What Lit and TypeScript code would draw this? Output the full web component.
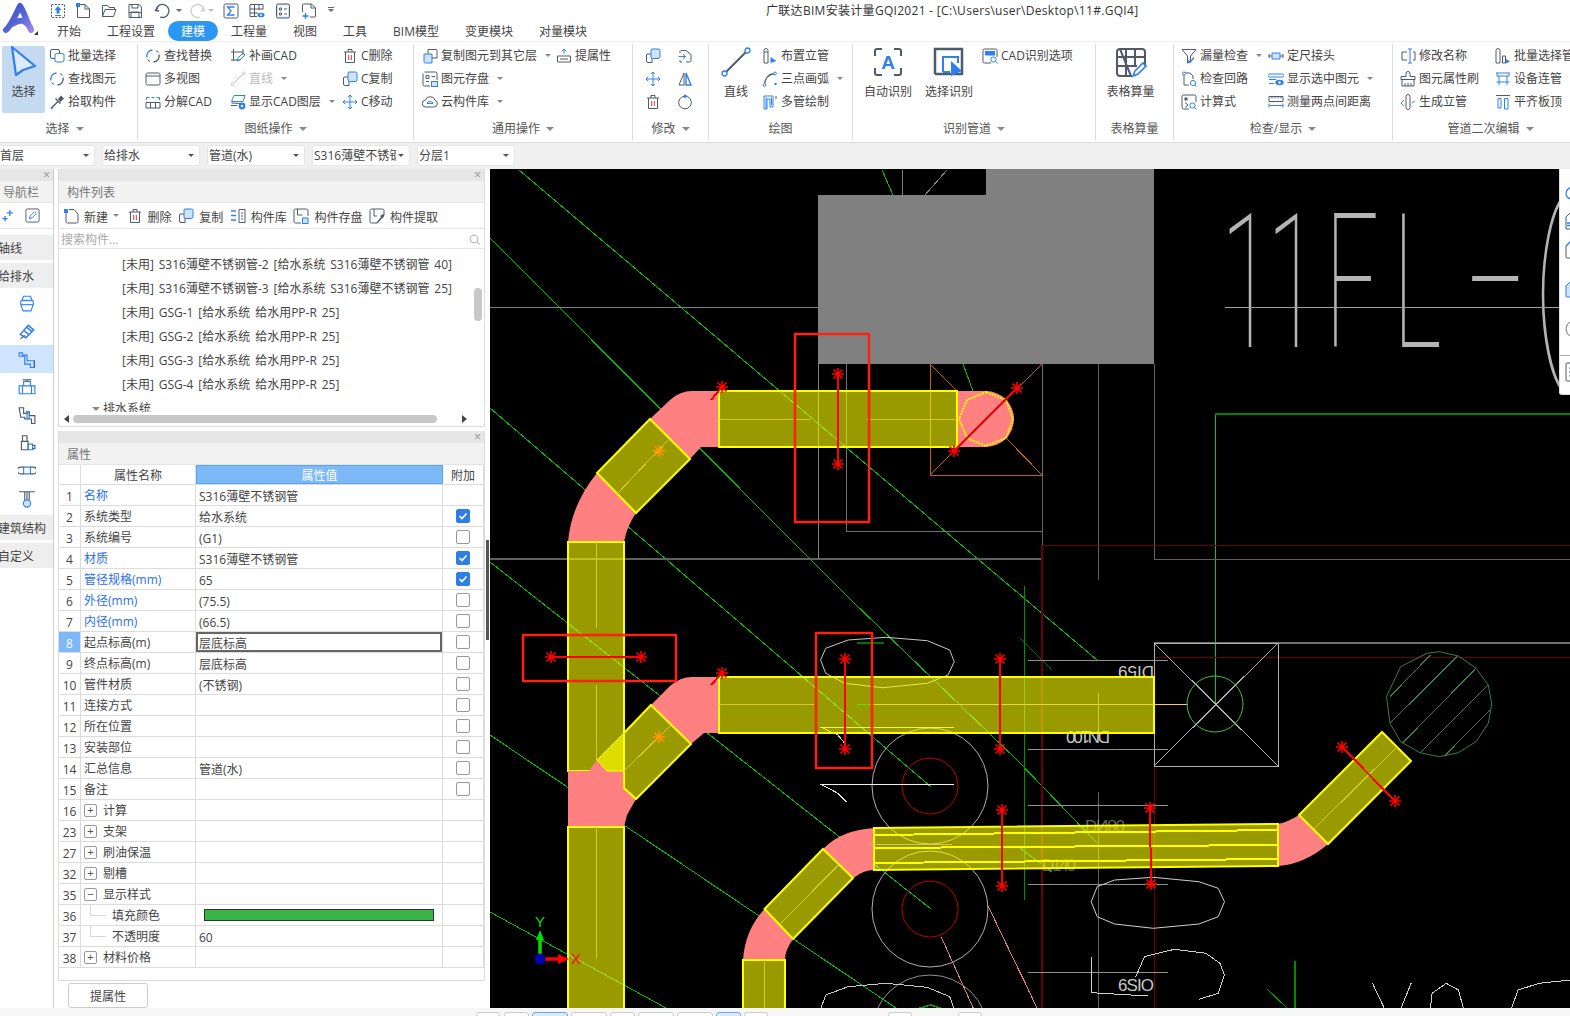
import { LitElement, html, css, svg } from "lit";
import { customElement } from "lit/decorators.js";

const D = "#4f5a6b", B = "#2f80ed", R = "#d9363e", F = "#cfe3fb";
const s = (d: string, c = D, w = 1) => svg`<path d=${d} stroke=${c} stroke-width=${w} fill="none"/>`;
const fl = (d: string, c = B, f = F) => svg`<path d=${d} stroke=${c} fill=${f}/>`;

const ICONS: Record<string, any> = {
  batch: svg`${s("M3 1.500h6a1.500 1.500 0 0 1 1.500 1.500v6a1.500 1.500 0 0 1-1.500 1.500H3A1.500 1.500 0 0 1 1.500 9V3A1.500 1.500 0 0 1 3 1.500z")}${fl("M7.500 5.500h6a1.500 1.500 0 0 1 1.500 1.500v5a2 2 0 0 1-2 2H8a2 2 0 0 1-2-2V7a1.500 1.500 0 0 1 1.500-1.500z", B, "#fff")}`,
  find: svg`${s("M2 9.500A6 6 0 0 1 7.500 2", B, 1.300)}${s("M14 6.500A6 6 0 0 1 8.500 14", D, 1.300)}${s("M11 2.500l2.500 2M2.500 11.500l2.500 2", D)}`,
  pick: svg`${s("M2 14.500l7.500-7.500M6.500 4.500l5 5", D, 1.400)}<path d="M9 5l3-3.500 3 3L11.500 8z" fill=${D}/>${s("M2 14.500l2-1", B, 1.500)}`,
  view: svg`${s("M2.500 2h11A1.500 1.500 0 0 1 15 3.500v9a1.500 1.500 0 0 1-1.500 1.500h-11A1.500 1.500 0 0 1 1 12.500v-9A1.500 1.500 0 0 1 2.500 2zM1 5h14")}`,
  explode: svg`${s("M1.500 6V3.500h3M11.500 3.500h3V6M6.500 3.500h3", B)}${s("M1 8.500h14v5.500H1zM5.500 8.500V14M10.500 8.500V14")}`,
  patch: svg`${s("M1 4h12M3.500 1v12M1 12h9M13 1v6")}${s("M7 13l1-3 5-5 2 2-5 5z", B)}`,
  line: svg`${s("M3 13L13 3", "#c4c4c4")}<circle cx="2.500" cy="13.500" r="1.400" stroke="#c4c4c4" fill="#fff"/><circle cx="13.500" cy="2.500" r="1.400" stroke="#c4c4c4" fill="#fff"/>`,
  layers: svg`${s("M4 1.500h11l-2 6H1.500z", B)}${s("M1.500 9l9 .5M1 11.500h6")}<circle cx="12" cy="12" r="3.400" fill=${B}/><circle cx="12" cy="12" r="1.200" fill="#fff"/>`,
  del: svg`${s("M2 4h12M6 4V1.500h4V4M3.500 4v10.500h9V4")}${s("M6.700 7v5M9.300 7v5", R)}`,
  copy: svg`${s("M2 6h5v8.500H3a1.500 1.500 0 0 1-1.500-1.500V7z")}${fl("M6.500 1h7A1.500 1.500 0 0 1 15 2.500v6a2 2 0 0 1-2 2H7.500A1.500 1.500 0 0 1 6 9V2z")}`,
  move: svg`${s("M8 1v14M1 8h14M8 1L6 3M8 1l2 2M8 15l-2-2M8 15l2-2M1 8l2-2M1 8l2 2M15 8l-2-2M15 8l-2 2", B)}`,
  copyto: svg`${fl("M2 6h8v9H3.500A1.500 1.500 0 0 1 2 13.500z")}${s("M6 1.500h8a1 1 0 0 1 1 1V10H10")}${s("M6 6V2")}`,
  disk: svg`${s("M2.500 1h11A1.500 1.500 0 0 1 15 2.500V9M8 15H2.500A1.500 1.500 0 0 1 1 13.500v-11M4 4.500h3v3H4zM9.500 5.500H13M4 10.500h3")}<rect x="9.500" y="10.500" width="6" height="5" fill=${F} stroke=${B}/>`,
  cloud: svg`${s("M4 13h8a3.500 3.500 0 0 0 1-6.800A5 5 0 0 0 3.500 6 3.500 3.500 0 0 0 4 13z")}${s("M5 9.500a3 2 0 0 1 6 0z", B)}`,
  attr: svg`${s("M1.500 8h13v6h-13zM4 11h8")}${s("M8 6V1M5.500 3.500L8 1l2.500 2.500", B)}`,
  mirror: svg`${s("M4 2.500h5l5 4v6c0 1-1 1.500-2 1.500H9")}${s("M1.500 8.500h7M6 6l2.500 2.500L6 11", B)}${s("M3 2.500V5M3 12v2h2")}`,
  flip: svg`${s("M7 2v12H2z")}<path d="M9 2v12h5z" stroke=${B} fill="none" stroke-width="1.400"/>`,
  rotate: svg`<circle cx="8" cy="8.500" r="6.300" stroke=${D} fill="none"/><path d="M7 0l4 2.300L7 4.500z" fill=${B}/>`,
  riser: svg`${s("M2 2.500a2 2 0 0 1 4 0V15H2zM2 4h4")}<path d="M8.500 9l6 4-6 2z" fill=${B}/>`,
  arc: svg`${s("M2.500 13.500C3 8 6 3.500 12 2.500", D, 1.300)}<circle cx="13" cy="2.500" r="1.400" fill="#fff" stroke=${B}/><circle cx="2.500" cy="14" r="1.400" fill="#fff" stroke=${B}/><circle cx="13.500" cy="13" r="1.200" fill=${B}/>`,
  multi: svg`${s("M2 15V2h9v11H8V5H5v10zM4 15V3.500M9.500 3.500V11", B)}${s("M14 2v3")}`,
  cadopt: svg`${s("M9 15H2.500A1.500 1.500 0 0 1 1 13.500v-11A1.500 1.500 0 0 1 2.500 1h11A1.500 1.500 0 0 1 15 2.500V9")}<rect x="3" y="3" width="10" height="4.500" fill=${B}/><circle cx="11.500" cy="11.500" r="2.600" stroke=${B} fill="none"/>${s("M13.500 13.500l2 2", B)}`,
  leak: svg`${s("M1 1.500h14L9.500 8v5.500L6.500 15V8z")}${s("M7 12l2 2.500 4-5", B, 1.300)}`,
  loop: svg`${s("M3 4v10h5M3 2h6l3 3v3")}<circle cx="3" cy="2.500" r="1.500" stroke=${B} fill="#fff"/><circle cx="12" cy="12" r="2.600" stroke=${B} fill="none"/>${s("M14 14l1.500 1.500", B)}`,
  calc: svg`${s("M8 15H2.500A1.500 1.500 0 0 1 1 13.500v-11A1.500 1.500 0 0 1 2.500 1h11A1.500 1.500 0 0 1 15 2.500V8M4 8.500l3 2.500-3 2.500")}<rect x="3.500" y="3.500" width="3" height="3" fill=${D}/><circle cx="11.500" cy="11.500" r="2.600" stroke=${B} fill="none"/>${s("M13.500 13.500l2 2", B)}`,
  joint: svg`${s("M1 6v4M1 8h3M15 6v4M12 8h3", D)}${fl("M4 5h8v6H4z", B, F)}`,
  show: svg`${s("M1.500 3h13a1 1 0 0 1 0 3h-13a1 1 0 0 1 0-3zM1 8.500h7M1 12.500h5", B)}<ellipse cx="11.500" cy="11.500" rx="4.200" ry="2.800" fill=${B}/><circle cx="11.500" cy="11.500" r="1.200" fill="#fff"/>`,
  measure: svg`${s("M1 2.500h14v5H1zM4 2.500v2M7 2.500v2M10 2.500v2M13 2.500v2")}${s("M1 11.500h14M1 9.500v4M15 9.500v4", B)}`,
  rename: svg`${s("M8 1h4M8 15h4M10 1v14", B)}${s("M7 4H2v8h5M13 4h2v8h-2")}`,
  brush: svg`${s("M6 5.500V2.500a2 2 0 0 1 4 0v3h5v3H1v-3zM2 8.500V15h12V8.500M5 15v-3M8 15v-3M11 15v-3")}`,
  genriser: svg`${s("M6 2.500a2 2 0 0 1 4 0v11a2 2 0 0 1-4 0z")}${s("M1 9l3-3M1 9l3 3M12 9l3-2", B)}`,
  riser2: svg`${s("M1 2.500a2 2 0 0 1 4 0V15H1zM7.500 8h3v7h-3z")}<path d="M11 11l4 2.500-4 2z" fill=${B}/>`,
  dev: svg`${s("M1 2h14M2 2v3h12V2M4 5v9M12 5v9M1.500 11h13", B)}`,
  level: svg`${s("M1 1.500h14")}${s("M3 4.500h3V14H3zM9.500 4.500h3.500V15H9.500z", B)}`,
  neww: svg`${s("M3 3v10.500A1.500 1.500 0 0 0 4.500 15h9a1.500 1.500 0 0 0 1.500-1.500V6l-4-4.500H6")}<rect x="1" y="1" width="4" height="4" fill=${B}/>`,
  libr: svg`${s("M9 1.500h6v13H9zM11 5h2M11 8h2M11 11h2")}${s("M1 3h5M1 7.500h5M1 12h5", B, 1.300)}`,
  save2: svg`${s("M8 15H2.500A1.500 1.500 0 0 1 1 13.500v-11A1.500 1.500 0 0 1 2.500 1h11A1.500 1.500 0 0 1 15 2.500V8M4.500 1v6h5")}<rect x="9.500" y="10" width="5.500" height="5.500" fill=${F} stroke=${B}/>`,
  extract: svg`${s("M8 15H2.500A1.500 1.500 0 0 1 1 13.500v-11A1.500 1.500 0 0 1 2.500 1h11A1.500 1.500 0 0 1 15 2.500V7M5 1v7h3")}${s("M8 15l5-6", D, 1.500)}<path d="M11 8l3-2 1.500 1.500-2 3z" fill=${D}/>`,
  plus2: svg`${s("M9 1v7M5.500 4.500h7", B, 1.500)}${s("M3.500 8v6M.5 11h6", B, 1.500)}`,
  edit: svg`${s("M2.500 1h11A1.500 1.500 0 0 1 15 2.500v11a1.500 1.500 0 0 1-1.500 1.500h-11A1.500 1.500 0 0 1 1 13.500v-11A1.500 1.500 0 0 1 2.500 1z")}${s("M4.500 11.500l1-3 4.500-4.500 2 2-4.500 4.500z", B)}`,
  n1: svg`${fl("M5 2h6l1.500 3.500H3.500z", B, "#fff")}${fl("M2.500 6h11v3.500l-2 5.500h-7l-2-5.500z", B, "#fff")}${s("M2.500 9.500h11", B)}`,
  n2: svg`${s("M2 11l7-8 5 4-7 7zM5 7.500l5 4M7.500 4.500l5 4", B, 1.300)}${s("M2 15l4-3", D)}`,
  n3: svg`${s("M1 2.500v3h5v7h5v3h3.500v-6H8V4.500H4v-2z", B)}${s("M14.500 9.500v6", D)}`,
  n4: svg`${s("M1 7h14v7H1zM5 7V3h6v4", B)}${s("M4 1.500h8M8 1.500v2")}${s("M4 7v7M12 7v7", B)}`,
  n5: svg`${s("M1 1.500h4v5h3V5h2v3.500h5v7h-3v-4H6V10H2.500z")}${s("M8 5h2v6H8z", B)}`,
  n6: svg`${s("M4 1.500h4v5H4zM3 6.500h6V14H3z")}${s("M9 9h4v5H9z", B)}${s("M13 10h2v3h-2")}`,
  n7: svg`${fl("M5 4.500h6v6H5z", B, "#fff")}${s("M5 4.500H2.500a3 3 0 0 0 0 6H5M11 4.500h2.500a3 3 0 0 1 0 6H11")}`,
  n8: svg`${s("M1 1.500h14M8 1.500V9M6 1.500V9M10 1.500V9")}<circle cx="8" cy="12" r="3.200" fill=${F} stroke=${B}/>`,
  q1: svg`<rect x="1.500" y="1.500" width="13" height="13" stroke=${D} fill="none" stroke-dasharray="2 1.300"/><path d="M8 3l3.500 4H9.500v3.500h-3V7H4.500z" fill=${B}/><path d="M5 12.500h6" stroke=${B}/>`,
  q2: svg`${s("M5 1.500h5l4.500 4.500v8.500h-12V3.500")}<rect x="1" y="0" width="4" height="4" fill=${B}/>${s("M10 1.500V6h4.500")}`,
  q3: svg`${s("M1.500 13.500v-11h5l1.500 2h5.500v2M1.500 13.500l2.500-7h11l-2.500 7z")}`,
  q4: svg`${s("M2 1.500h10l2.500 2.500v10.500H2zM5 1.500V5h6V1.500M4 14.500V9h8v5.500M1.800 9.500h12.400", D)}`,
  q5: svg`${s("M4 4.500l-2.500 3 3.500 .5", D, 1.300)}${s("M2 7a6.500 6.500 0 1 1 4 7", D, 1.300)}`,
  q6: svg`${s("M12 4.500l2.500 3-3.500 .5", "#ccc", 1.300)}${s("M14 7a6.500 6.500 0 1 0-4 7", "#ccc", 1.300)}`,
  q7: svg`${s("M2.500 1h11A1.500 1.500 0 0 1 15 2.500v11a1.500 1.500 0 0 1-1.500 1.500h-11A1.500 1.500 0 0 1 1 13.500v-11A1.500 1.500 0 0 1 2.500 1z")}${s("M11.500 4h-7l3.500 4-3.500 4h7", B, 1.300)}`,
  q8: svg`${s("M1 1.500h13v5M1 1.500v12h7M5.500 1.500v12M1 6h13M1 10h8M10 1.500V7")}<ellipse cx="12" cy="12" rx="3.500" ry="2.300" fill=${B}/><circle cx="12" cy="12" r="1" fill="#fff"/>`,
  q9: svg`<rect x="1.500" y="1" width="13" height="14" rx="1.500" fill=${F} stroke=${D} /><rect x="3" y="2.500" width="10" height="11" fill="#fff"/>${s("M4.500 5h2v2h-2zM9 6h3M4.500 10h2v2h-2zM9 11h3", D)}`,
  q10: svg`${s("M1.500 9V2a1 1 0 0 1 1-1h8l4 4v8a1 1 0 0 1-1 1H9M10 1v4h4.500")}${s("M1.500 13h6M4.500 10v6", B, 1.400)}`,
};

const BIG: Record<string, any> = {
  sel: svg`<path d="M4 2L27 21l-12 4-7 5z" transform="translate(0 -1)" fill="#dce9f7" stroke=${B} stroke-width="2.200" stroke-linejoin="round"/>`,
  line: svg`<path d="M6 26L26 6" stroke=${D} stroke-width="2"/><circle cx="4.500" cy="27.500" r="2.500" fill="#fff" stroke=${B} stroke-width="1.300"/><circle cx="27.500" cy="4.500" r="2.500" fill="#fff" stroke=${B} stroke-width="1.300"/>`,
  auto: svg`${s("M3 10V5a2 2 0 0 1 2-2h5M22 3h5a2 2 0 0 1 2 2v5M29 22v5a2 2 0 0 1-2 2h-5M10 29H5a2 2 0 0 1-2-2v-5", D, 2)}<text x="16" y="23" text-anchor="middle" font-family="Liberation Sans" font-weight="700" font-size="19" fill=${B}>A</text>`,
  pick: svg`${s("M2 28V3h27v25H2", D, 2.500)}${s("M10 26V11h15v6M10 26h7", B, 2)}<path d="M18 15l11 10-11 5z" fill=${B}/>`,
  table: svg`${s("M5 3h22a3 3 0 0 1 3 3v14M16 30H5a3 3 0 0 1-3-3V6a3 3 0 0 1 3-3zM2 11h28M2 20h20M11 3v27M20 3v17", D, 2)}${s("M18 30l2-5 8-8 3 3-8 8z", B, 1.600)}`,
};

const ic = (k: string, z = 16) => html`<svg class="ic" width=${z} height=${z} viewBox="0 0 16 16" fill="none">${ICONS[k]}</svg>`;

type Item = { i: string; t: string; dd?: boolean; off?: boolean };
type Col = { w?: number; items?: Item[]; big?: string; bt?: string; mr?: number };
type Group = { w: number; pad: number; label: string; dd?: boolean; cols: Col[]; lo?: number };

const GROUPS: Group[] = [
  { w: 138, pad: 2, label: "选择", dd: true, lo: -8, cols: [
    { big: "sel", bt: "选择" },
    { items: [{ i: "batch", t: "批量选择" }, { i: "find", t: "查找图元" }, { i: "pick", t: "拾取构件" }] },
  ]},
  { w: 276, pad: 7, label: "图纸操作", dd: true, cols: [
    { w: 85, items: [{ i: "find", t: "查找替换" }, { i: "view", t: "多视图" }, { i: "explode", t: "分解CAD" }] },
    { w: 112, items: [{ i: "patch", t: "补画CAD" }, { i: "line", t: "直线", dd: true, off: true }, { i: "layers", t: "显示CAD图层", dd: true }] },
    { items: [{ i: "del", t: "C删除" }, { i: "copy", t: "C复制" }, { i: "move", t: "C移动" }] },
  ]},
  { w: 219, pad: 8, label: "通用操作", dd: true, cols: [
    { w: 134, items: [{ i: "copyto", t: "复制图元到其它层", dd: true }, { i: "disk", t: "图元存盘", dd: true }, { i: "cloud", t: "云构件库", dd: true }] },
    { items: [{ i: "attr", t: "提属性" }] },
  ]},
  { w: 76, pad: 12, label: "修改", dd: true, cols: [
    { w: 32, items: [{ i: "copy", t: "" }, { i: "move", t: "" }, { i: "del", t: "" }] },
    { items: [{ i: "mirror", t: "" }, { i: "flip", t: "" }, { i: "rotate", t: "" }] },
  ]},
  { w: 144, pad: 9, label: "绘图", cols: [
    { big: "line", bt: "直线", w: 36, mr: 8 },
    { items: [{ i: "riser", t: "布置立管" }, { i: "arc", t: "三点画弧", dd: true }, { i: "multi", t: "多管绘制" }] },
  ]},
  { w: 243, pad: 11, label: "识别管道", dd: true, cols: [
    { big: "auto", bt: "自动识别", w: 48, mr: 13 },
    { big: "pick", bt: "选择识别", w: 48, mr: 9 },
    { items: [{ i: "cadopt", t: "CAD识别选项" }] },
  ]},
  { w: 78, pad: 10, label: "表格算量", cols: [{ big: "table", bt: "表格算量", w: 49 }] },
  { w: 219, pad: 7, label: "检查/显示", dd: true, cols: [
    { w: 87, items: [{ i: "leak", t: "漏量检查", dd: true }, { i: "loop", t: "检查回路" }, { i: "calc", t: "计算式" }] },
    { items: [{ i: "joint", t: "定尺接头" }, { i: "show", t: "显示选中图元", dd: true }, { i: "measure", t: "测量两点间距离" }] },
  ]},
  { w: 177, pad: 7, label: "管道二次编辑", dd: true, lo: 18, cols: [
    { w: 95, items: [{ i: "rename", t: "修改名称" }, { i: "brush", t: "图元属性刷" }, { i: "genriser", t: "生成立管" }] },
    { items: [{ i: "riser2", t: "批量选择管" }, { i: "dev", t: "设备连管" }, { i: "level", t: "平齐板顶" }] },
  ]},
];

const TABS = ["开始", "工程设置", "建模", "工程量", "视图", "工具", "BIM模型", "变更模块", "对量模块"];
const QAT: [string, number][] = [["q1", 50], ["q2", 75], ["q3", 101], ["q4", 127], ["q5", 154], ["q6", 190], ["q7", 223], ["q8", 249], ["q9", 275], ["q10", 301]];

type Row = { n: number; k: string; v?: string; blue?: boolean; c?: "c" | "u"; exp?: string; tree?: number; bar?: boolean; sel?: boolean };
const ROWS: Row[] = [
  { n: 1, k: "名称", v: "S316薄壁不锈钢管", blue: true },
  { n: 2, k: "系统类型", v: "给水系统", c: "c" },
  { n: 3, k: "系统编号", v: "(G1)", c: "u" },
  { n: 4, k: "材质", v: "S316薄壁不锈钢管", blue: true, c: "c" },
  { n: 5, k: "管径规格(mm)", v: "65", blue: true, c: "c" },
  { n: 6, k: "外径(mm)", v: "(75.5)", blue: true, c: "u" },
  { n: 7, k: "内径(mm)", v: "(66.5)", blue: true, c: "u" },
  { n: 8, k: "起点标高(m)", v: "层底标高", c: "u", sel: true },
  { n: 9, k: "终点标高(m)", v: "层底标高", c: "u" },
  { n: 10, k: "管件材质", v: "(不锈钢)", c: "u" },
  { n: 11, k: "连接方式", c: "u" },
  { n: 12, k: "所在位置", c: "u" },
  { n: 13, k: "安装部位", c: "u" },
  { n: 14, k: "汇总信息", v: "管道(水)", c: "u" },
  { n: 15, k: "备注", c: "u" },
  { n: 16, k: "计算", exp: "+" },
  { n: 23, k: "支架", exp: "+" },
  { n: 27, k: "刷油保温", exp: "+" },
  { n: 32, k: "剔槽", exp: "+" },
  { n: 35, k: "显示样式", exp: "-" },
  { n: 36, k: "填充颜色", tree: 1, bar: true },
  { n: 37, k: "不透明度", v: "60", tree: 2 },
  { n: 38, k: "材料价格", exp: "+" },
];
const LIST = [
  "[未用] S316薄壁不锈钢管-2 [给水系统 S316薄壁不锈钢管 40]",
  "[未用] S316薄壁不锈钢管-3 [给水系统 S316薄壁不锈钢管 25]",
  "[未用] GSG-1 [给水系统 给水用PP-R 25]",
  "[未用] GSG-2 [给水系统 给水用PP-R 25]",
  "[未用] GSG-3 [给水系统 给水用PP-R 25]",
  "[未用] GSG-4 [给水系统 给水用PP-R 25]",
];
const TOOLS: [string, string, boolean?][] = [["neww", "新建", true], ["del", "删除"], ["copy", "复制"], ["libr", "构件库"], ["save2", "构件存盘"], ["extract", "构件提取"]];
const DROPS: [string, number][] = [["首层", 97], ["给排水", 98], ["管道(水)", 98], ["S316薄壁不锈钢管", 98], ["分层1", 98]];
const TABBTN: [number, number, boolean?][] = [[476, 24], [504, 25], [532, 36, true], [571, 36], [610, 25], [638, 36], [677, 36], [716, 25, true], [744, 24], [888, 24], [958, 24]];

// --- canvas helpers: coordinates read from crops are mapped to page coordinates ---
const map = (pts: string, ox: number, oy: number, sx: number) =>
  pts.trim().split(/\s+/).map((p) => { const [x, y] = p.split(",").map(Number); return `${(ox + x / sx).toFixed(1)},${(oy + y / 3).toFixed(1)}`; }).join(" ");
const z8 = (p: string) => map(p, 490, 600, 2.904);
const z9 = (p: string) => map(p, 1020, 600, 2.851);
const L = (pts: string, c: string, w = 1) => svg`<polyline points=${pts} fill="none" stroke=${c} stroke-width=${w} shape-rendering="crispEdges"/>`;
const star = (x: number, y: number, c = "#ff0000") => svg`<g stroke=${c} stroke-width="1.600">
  <path d=${`M${x - 6} ${y}H${x + 6}M${x} ${y - 6}V${y + 6}M${x - 4.500} ${y - 4.500}L${x + 4.500} ${y + 4.500}M${x - 4.500} ${y + 4.500}L${x + 4.500} ${y - 4.500}`}/></g>`;
const PIPE = "#ffff00", PINK = "#ff8080", GR = "#00c000", G1 = "#808080", DR = "#6a0000";
const pipe = (pts: string, w = 2) => svg`<polygon points=${pts} fill=${PIPE} fill-opacity="0.6" stroke=${PIPE} stroke-width=${w} stroke-linejoin="miter"/>`;
const CL = "#d8c830";

function drawing() {
  return svg`
  <g>
    ${L("519,170 1097,660", GR)}
    ${L("490,238 851,600 1017,760 1097,843", GR)}
    ${L("490,408 931,787", GR)}
    ${L("490,562 931,909", GR)}
    ${L("490,735 896,1008", GR)}
    ${L("490,912 666,1008", GR)}
    ${L("1020,848 1052,872", GR)}
    ${L("882,170 893,195", GR)}
    ${L("963,364 973,391", GR)}
    ${L("1215,414 1215,704", "#00d000")}
    ${L("1215,414 1570,414", "#008000", 2)}
    ${L("1024,586 1024,900", "#009000")}
    ${L("1020,638 1052,670", "#007000")}
    ${L("857,643 884,643", "#007000", 2)}
    ${L("1295,961 1295,1008", "#008a00", 2)}
    ${L("1267,989 1287,1008", "#00a000")}
    ${L("902,170 902,195", G1)}
    ${L("947,170 925,195", G1)}
    ${L("490,307 818,307", G1)}
    ${L("490,559 1042,559", "#606060", 2)}
    ${L("818,364 818,559", G1)}
    ${L("846,364 846,531 1042,531", "#707070")}
    ${L("1042,364 1042,559", "#606060")}
    ${L("1098,364 1098,580", "#606060")}
    ${L("1154,364 1154,559 1570,559", "#606060")}
    ${L("1042,545 1570,545", DR)}
    ${L("1042,545 1042,1008", DR, 2)}
    ${L("1154,643 1154,1008", DR)}
    ${L("1154,657 1570,657", DR)}
    ${L("1098,792 1098,1008", "#606060")}
    ${L("1098,693 1098,733", "#808080")}
    ${["660", "749", "805", "884", "972"].map((y) => L(`1028,${y} 1168,${y}`, "#909090", 1))}
  </g>

  <polygon points="818,195 986,195 986,169 1154,169 1154,364 818,364" fill="#808080"/>

  <g>
    ${L("930,364 957,391", "#c06400")}
    ${L("1042,364 930,475", "#c06400")}
    ${L("1006,438 1042,475 930,475 930,364", "#c06400")}
    ${L("1042,364 1042,475", "#707070")}
  </g>

  ${L("1154,643 1570,643", "#707070", 2)}
  ${L("1154,643 1278,643 1278,766 1154,766 1154,643", "#b0b0b0")}
  ${L("1154,643 1278,766", "#b0b0b0")}
  ${L("1278,643 1154,766", "#b0b0b0")}
  ${L("1155,704 1188,704", "#ffc080")}
  <circle cx="1215" cy="704" r="28" fill="none" stroke="#40c040"/>
  <polygon points=${z9("1045,290 1085,200 1160,160 1195,155 1250,168 1300,205 1335,255 1345,312 1335,370 1300,425 1250,458 1195,470 1140,458 1085,425 1055,370")} fill="none" stroke="#3a7c52"/>
  ${L(z9("1055,290 1170,165"), "#3a7c52")}${L(z9("1055,370 1245,170"), "#3a7c52")}${L(z9("1090,430 1300,205"), "#3a7c52")}${L(z9("1140,460 1335,255"), "#3a7c52")}${L(z9("1210,468 1340,330"), "#3a7c52")}

  <g fill="none">
    <circle cx="930" cy="786" r="58" stroke="#b0b0b0"/>
    <circle cx="930" cy="786" r="28" stroke="#c00000"/>
    <circle cx="930" cy="909" r="58" stroke="#b0b0b0"/>
    <circle cx="930" cy="909" r="28" stroke="#c00000"/>
    <circle cx="930" cy="1033" r="58" stroke="#909090"/>
  </g>
  ${L(z8("1235,1228 1280,1215 1320,1228"), "#00a000", 1.500)}
  ${L(z8("1310,1010 1405,1228"), "#e08080")}
  ${L(z8("1445,915 1568,1180"), "#e08080")}
  ${L(z9("0,1115 50,1228"), "#e08080")}
  ${L(z8("960,552 1346,552"), "#f0f0f0")}
  ${L(z8("960,552 1010,580 1035,605"), "#e0e0e0")}
  ${L(z8("960,381 1346,381"), "#e0e0c0")}
  ${L(z8("960,381 1010,405 1030,430"), "#e0e0c0")}
  <polygon points=${z8("960,180 975,145 1040,120 1150,112 1270,122 1335,150 1348,185 1330,225 1270,250 1140,263 1030,250 975,220")} fill="none" stroke="#c8c8c8"/>
  ${L(z8("960,1228 975,1185 1040,1160 1150,1150 1270,1162 1335,1190 1348,1228"), "#c8c8c8")}
  <polygon points=${z9("203,905 220,860 270,840 380,832 510,845 565,865 583,905 565,950 510,972 380,985 270,972 220,950")} fill="none" stroke="#d0d0d0"/>
  ${L(z9("510,1198 565,1180 583,1125 570,1090 530,1060 440,1048 355,1070 330,1130"), "#d0d0d0")}
  ${L(z9("203,1070 203,1178 365,1188"), "#d0d0d0")}
  ${L(z9("1005,1150 1040,1228"), "#d0d0d0")}${L(z9("1115,1150 1085,1228"), "#d0d0d0")}
  ${L(z9("1170,1228 1175,1180 1215,1150 1250,1170 1265,1228"), "#d0d0d0")}
  ${L(z9("1400,1228 1420,1170 1480,1150 1568,1140"), "#d0d0d0")}

  <g class="cad">
    <text transform="rotate(180 1136 672)" x="1136" y="678" text-anchor="middle" font-size="17" textLength="36">DI59</text>
    <text transform="rotate(180 1088 737)" x="1088" y="743" text-anchor="middle" font-size="17" textLength="44">DN100</text>
    <text transform="translate(0 1653) scale(1 -1)" x="1105" y="833" text-anchor="middle" font-size="17" textLength="40" fill-opacity="0.500">DN80</text>
    <text x="1059" y="871" text-anchor="middle" font-size="17" textLength="34" fill-opacity="0.500">D140</text>
    <text x="1136" y="991" text-anchor="middle" font-size="17" textLength="36">6SIO</text>
  </g>

  <g class="cadtitle" transform="scale(0.5 1)">
    <text y="347" x="2442 2534 2650 2786 2930 3070">11FL–(</text>
  </g>
  ${L("1225,307 1570,307", "#a0a0a0")}

  <!-- pipe run 1 -->
  <path d="M719 391H692Q680 391 670 400L650 419L690 459L701 447H719Z" fill=${PINK}/>
  <path d="M597 473Q571 505 568 542H624Q627 526 636 513Z" fill=${PINK}/>
  <path d="M957 391H986V447H957Z" fill=${PINK}/>
  <circle cx="986" cy="419" r="28" fill=${PINK}/>
  <polygon points="986,392 1006,400 1013,419 1006,438 986,446 967,438 959,419 967,400" fill="none" stroke=${PIPE} stroke-width="2" stroke-dasharray="2 1"/>
  ${pipe("719,391 957,391 957,447 719,447")}
  ${L("719,419 810,419", CL)}${L("867,419 957,419", CL)}
  ${pipe("650,419 690,459 636,513 597,473")}
  ${L("668,440 617,494", CL)}
  ${pipe("568,542 624,542 624,771 568,771")}
  ${L("596,542 596,628", CL)}${L("596,685 596,760", CL)}

  <!-- pipe run 2 -->
  <polygon points="568,771 589,771 597,760 607,771 624,771 624,788 636,799 627,815 624,827 568,827" fill=${PINK}/>
  <path d="M651 705L670 686Q680 677 692 677H719V733H704L691 744Z" fill=${PINK}/>
  <polygon points="597,760 624,733 624,771 607,771" fill="#dddd00" stroke=${PIPE}/>
  ${pipe("651,705 691,744 636,799 624,788 624,733")}
  ${L("671,725 624,771", CL)}
  ${pipe("568,827 624,827 624,1012 568,1012")}
  ${L("596,827 596,959", CL)}
  ${pipe("719,677 1154,677 1154,733 719,733")}
  ${L("719,704 814,704", CL)}${L("857,704 1154,704", "#e8d840")}
  ${L("857,704 870,704", "#60e000")}

  <!-- pipe run 3 -->
  <path d="M823 849Q834 838 848 833Q860 829 874 828V870Q864 870 855 877L853 878Z" fill=${PINK}/>
  <path d="M764.500 909Q745 930 743 960H785Q785 950 793 939Z" fill=${PINK}/>
  <path d="M1278 824Q1288 822 1299 815L1328 844Q1305 864 1278 866Z" fill=${PINK}/>
  ${pipe("823,849 853,878 793,939 764.500,909")}
  ${L("838.500,865 780,924", CL)}
  ${pipe("743,960 785,960 785,1012 743,1012")}
  ${L("764,960 764,1008", CL)}
  ${pipe("874,828 1278,824 1278,866 874,870")}
  ${L("874,835 1278,830", PIPE, 2)}${L("874,848 1278,845", PIPE, 2)}${L("874,863 1278,859", PIPE, 2)}
  ${L("869,844 952,844", "#c8c860")}
  ${pipe("1299,815 1382,732 1411,761 1328,844")}
  ${L("1314,829 1397,747", CL)}

  <!-- handles -->
  ${L("838,374 838,464", "#ff0000", 2)}
  ${star(838, 374)}${star(838, 464)}
  ${L("722,387 711,400", "#ff0000", 2)}${star(722, 387)}
  ${L("1017,388 954,451", "#ff0000", 2)}${star(1017, 388)}${star(954, 451)}
  ${star(659, 451, "#ff9900")}
  ${L("722,673 711,685", "#ff0000", 2)}${star(722, 673)}
  ${star(659, 737, "#ff9900")}
  ${L("551,657 641,657", "#ff0000", 2)}${star(551, 657)}${star(641, 657)}
  ${L("845,659 845,749", "#ff0000", 2)}${star(845, 659)}${star(845, 749)}
  ${L("1000,659 1000,749", "#ff0000", 2)}${star(1000, 659)}${star(1000, 749)}
  ${L("1002,810 1002,886", "#ff0000", 2)}${star(1002, 810)}${star(1002, 886)}
  ${L("1150,808 1151,884", "#ff0000", 2)}${star(1150, 808)}${star(1151, 884)}
  ${L("1342,747 1395,801", "#ff0000", 2)}${star(1342, 747)}${star(1395, 801)}

  <!-- annotation rectangles -->
  <g fill="none" stroke="#ff2010" stroke-width="2.500" stroke-linejoin="round">
    <rect x="795" y="334" width="74" height="188"/>
    <rect x="523" y="635" width="153" height="46"/>
    <rect x="816" y="633" width="56" height="135"/>
  </g>

  <!-- axis -->
  <path d="M540 956V938" stroke="#00e000" stroke-width="3.500"/>
  <path d="M536 940L540 930L544 940Z" fill="#00e000"/>
  <text x="540" y="927" text-anchor="middle" class="ax" fill="#00e000">Y</text>
  <path d="M545 959H559" stroke="#ff0000" stroke-width="3.500"/>
  <path d="M558 954L569 959L558 964Z" fill="#ff0000"/>
  <text x="576" y="964" text-anchor="middle" class="ax" fill="#ff0000">X</text>
  <circle cx="540" cy="959" r="5.500" fill="#0000b0"/>
  `;
}

@customElement("app-root")
export class AppRoot extends LitElement {
  static styles = css`
    :host { display: block; width: 1570px; height: 1016px; overflow: hidden; background: #fff; font: 12px/17px "Open Sans", "Noto Sans CJK SC", "Liberation Sans", sans-serif; color: #444; }
    * { box-sizing: border-box; }
    svg.ic { flex: none; display: block; }
    .top { height: 41px; display: flex; }
    .logo { width: 44px; flex: none; position: relative; }
    .logo svg { display: block; margin: 2px 0 0 2px; }
    .logo i { position: absolute; left: 34px; top: 31px; border-style: solid; border-width: 0 0 4px 4px; border-color: transparent transparent #333 transparent; }
    .topr { flex: 1; min-width: 0; }
    .qat { height: 21px; position: relative; }
    .qat svg { position: absolute; top: 3px; }
    .qa { position: absolute; top: 9px; border-style: solid; border-width: 3px 3px 0 3px; border-color: #666 transparent transparent transparent; }
    .qa.light { border-top-color: #bbb; }
    .more { position: absolute; left: 284px; top: 7px; width: 6px; border-top: 1px solid #666; padding-top: 1px; }
    .more::after { content: ""; display: block; border-style: solid; border-width: 3px 3px 0 3px; border-color: #666 transparent transparent transparent; }
    .title { position: absolute; left: 722px; top: 2px; white-space: nowrap; font-size: 12px; color: #333; letter-spacing: .3px; }
    .tabs { display: flex; height: 20px; }
    .tab { padding: 0 13px; line-height: 22px; height: 20px; border-radius: 10px; white-space: nowrap; }
    .tab.on { background: #2b96f3; color: #fff; }
    .ribbon { height: 102px; border-top: 1px solid #eee; display: flex; padding-top: 2px; border-bottom: 1px solid #dcdcdc; }
    .group { flex: none; height: 96px; border-right: 1px solid #dcdcdc; display: flex; flex-direction: column; }
    .group:last-child { border-right: 0; }
    .gbody { height: 74px; display: flex; white-space: nowrap; }
    .glabel { height: 20px; display: flex; align-items: center; justify-content: center; gap: 6px; color: #555; padding-top: 1px; }
    .tri { width: 0; height: 0; border-style: solid; border-width: 4px 4px 0 4px; border-color: #888 transparent transparent transparent; flex: none; }
    .col { flex: none; }
    .item { height: 23px; display: flex; align-items: center; gap: 3px; color: #444; }
    .item.off { color: #bcbcbc; }
    .item .tri { margin-left: 5px; border-width: 3px 3px 0 3px; }
    .bigb { flex: none; display: flex; flex-direction: column; align-items: center; padding-top: 2px; gap: 5px; }
    .bigb.sel { background: #c3daf1; border-radius: 2px; height: 67px; width: 43px; margin: 2px 4px 0 0; padding-top: 0; }
    .bigb .bt { line-height: 17px; }
    .opts { height: 26px; background: #f0f0f0; display: flex; gap: 7px; padding-top: 2px; margin-left: -2px; }
    .drop { height: 21px; background: #fff; border-radius: 3px; display: flex; align-items: center; padding: 0 5px 0 1px; border: 1px solid #e6e6e6; }
    .drop span { flex: 1; min-width: 0; overflow: hidden; white-space: nowrap; }
    .drop .tri { border-width: 3px 3px 0 3px; border-top-color: #555; margin-left: 2px; }
    .body { display: flex; height: 839px; }
    .nav { width: 54px; flex: none; border-right: 1px solid #ccc; }
    .strip { height: 12px; background: #e6e6e6; position: relative; }
    .strip i { position: absolute; right: 3px; top: 0; font: 12px/12px "Liberation Sans", sans-serif; color: #999; }
    .ptitle { height: 22px; background: #f2f2f2; color: #777; line-height: 23px; padding-left: 8px; border-bottom: 1px solid #e4e4e4; }
    .nav .ptitle { padding-left: 3px; }
    .navtools { height: 26px; display: flex; align-items: center; gap: 9px; padding-left: 2px; border-bottom: 1px solid #e4e4e4; }
    .navcat { height: 25px; background: #eee; line-height: 27px; margin-bottom: 3px; white-space: nowrap; text-indent: -2px; overflow: hidden; }
    .navcat.first { margin-top: 6px; }
    .navcat.lead { margin-bottom: 1px; }
    .navic { height: 28px; display: flex; align-items: center; justify-content: center; }
    .navic.on { background: #cfe5ff; }
    .navcat.after { margin-top: 2px; }
    .mid { width: 427px; flex: none; margin-left: 4px; display: flex; flex-direction: column; }
    .panel { border: 1px solid #dcdcdc; border-top: 0; position: relative; overflow: hidden; }
    .list { height: 258px; }
    .ltools { height: 26px; display: flex; align-items: center; gap: 6.600px; padding-left: 4px; border-bottom: 1px solid #e4e4e4; white-space: nowrap; }
    .lt { display: flex; align-items: center; gap: 5px; }
    .lt span { position: relative; top: 2px; }
    .lt .tri { border-width: 3px 3px 0 3px; margin-right: 1px; }
    .search { height: 20px; display: flex; align-items: center; justify-content: space-between; padding: 2px 4px 0 2px; color: #aaa; border-bottom: 1px solid #e4e4e4; }
    .lrows { height: 163px; padding-top: 4px; overflow: hidden; white-space: nowrap; }
    .lrow { height: 24px; line-height: 24px; padding-left: 63px; word-spacing: 1.750px; }
    .lrow.tree { padding-left: 33px; display: flex; align-items: center; gap: 3px; }
    .hs { position: absolute; left: 0; right: 0; bottom: 0; height: 14px; background: #fff; }
    .hs b { position: absolute; left: 14px; top: 3px; width: 364px; height: 8px; background: #c8c8c8; border-radius: 4px; }
    .hs i { position: absolute; top: 3px; border-style: solid; border-width: 4px 5px 4px 0; border-color: transparent #444 transparent transparent; left: 5px; }
    .hs i.r { border-width: 4px 0 4px 5px; border-color: transparent transparent transparent #444; left: 403px; }
    .vs { position: absolute; left: 415px; top: 119px; width: 8px; height: 33px; background: #c8c8c8; border-radius: 4px; }
    .props { height: 550px; margin-top: 4px; }
    .table { width: 425px; }
    .tr { display: grid; grid-template-columns: 22px 115px 247px 41px; height: 21px; border-bottom: 1px solid #dcdcdc; }
    .tr > div { border-right: 1px solid #dcdcdc; line-height: 20px; white-space: nowrap; overflow: hidden; position: relative; padding-top: 2px; }
    .tr.head { height: 20px; }
    .tr.head > div { text-align: center; line-height: 19px; padding-top: 1px; }
    .tr.head .on { background: #7db8f7; color: #fff; border: 1px solid #5aa5f2; padding-top: 0; }
    .tr > .num { text-align: center; color: #444; }
    .tr > .num.on { background: #7db8f7; color: #fff; }
    .k { padding-left: 3px; display: flex; align-items: center; }
    .k.blue { color: #2b6fe8; }
    .tr > .treek { padding-left: 31px; }
    .tr > .v { padding-left: 3px; }
    .v.sel { box-shadow: inset 0 0 0 2px #666; }
    .tr > .chk { display: flex; align-items: center; justify-content: center; padding-top: 0; }
    .cb { width: 14px; height: 14px; border: 1px solid #999; border-radius: 2px; background: #fff; display: block; }
    .cb.on { background: #2d7fe3; border-color: #2d7fe3; }
    .cb svg { display: block; }
    .exp { width: 13px; height: 13px; border: 1px solid #999; border-radius: 2px; margin: -2px 6px 0 0; display: flex; align-items: center; justify-content: center; font: 11px/11px "Liberation Sans", sans-serif; color: #555; flex: none; }
    .treeln { position: absolute; left: 9px; top: -1px; width: 16px; border-left: 1px solid #d8d8d8; border-bottom: 1px solid #d8d8d8; height: 12px; }
    .bar { position: absolute; left: 8px; top: 4px; width: 230px; height: 12px; background: #39b54a; border: 1px solid #333; }
    .foot { height: 27px; padding: 2px 0 0 10px; }
    .btn { width: 80px; height: 25px; border: 1px solid #ccc; border-radius: 3px; display: flex; align-items: center; justify-content: center; padding-top: 1px; }
    .canvas { width: 1080px; flex: none; margin-left: 5px; background: #000; position: relative; height: 839px; }
    .canvas > svg { display: block; overflow: hidden; }
    .splitter { position: absolute; left: -4px; top: 371px; width: 3px; height: 100px; background: #555; }
    .cad text { font-family: "Liberation Sans", sans-serif; fill: #c8c8c8; }
    .cadtitle text { font-family: Roboto, "Liberation Sans", sans-serif; font-weight: 100; font-size: 188px; fill: #b4b4b4; }
    .ax { font: 15px "Liberation Sans", sans-serif; }
    .float { position: absolute; right: 0; top: 0; width: 11px; height: 226px; background: #fff; border: 1px solid #ddd; border-right: 0; border-top: 0; border-radius: 0 0 0 3px; overflow: hidden; }
    .float svg { position: absolute; left: 5px; }
    .float hr { position: absolute; left: 0; right: 0; top: 186px; margin: 0; border: 0; border-top: 1px solid #aaa; }
    .status { height: 8px; background: #f6f6f6; position: relative; }
    .sb { position: absolute; top: 4px; height: 8px; border: 1px solid #ccc; border-radius: 3px 3px 0 0; background: #fff; }
    .sb.on { background: #dcebfb; border-color: #6aa9ef; }
  `;

  render() {
    return html`
      <div class="top">
        <div class="logo">
          <svg width="34" height="32" viewBox="0 0 34 32" fill="none">
            <defs><linearGradient id="lg" x1="0" y1="0" x2="1" y2="1"><stop offset="0" stop-color="#3f4fc4"/><stop offset=".55" stop-color="#5566d8"/><stop offset="1" stop-color="#9a84e6"/></linearGradient></defs>
            <path d="M4 28C9 24 14 12 18 4c4 6 7 16 11 24M10 22c5-3 10-4 13-2 2 1 5 5 6 7" stroke="url(#lg)" stroke-width="6" stroke-linecap="round" stroke-linejoin="round"/>
          </svg><i></i>
        </div>
        <div class="topr">
          <div class="qat">
            ${QAT.map(([k, x]) => html`<svg class="ic" width="16" height="16" viewBox="0 0 16 16" fill="none" style="left:${x - 44}px">${ICONS[k]}</svg>`)}
            <i class="qa" style="left:${175 - 44 + 1}px"></i><i class="qa light" style="left:${208 - 44}px"></i>
            <i class="more"></i>
            <span class="title">广联达BIM安装计量GQI2021 - [C:\\Users\\user\\Desktop\\11#.GQI4]</span>
          </div>
          <div class="tabs">${TABS.map((t) => html`<div class="tab ${t === "建模" ? "on" : ""}">${t}</div>`)}</div>
        </div>
      </div>

      <div class="ribbon">
        ${GROUPS.map((g) => html`
          <div class="group" style="width:${g.w}px">
            <div class="gbody" style="padding-left:${g.pad}px">
              ${g.cols.map((c) => c.big
                ? html`<div class="bigb ${c.big === "sel" ? "sel" : ""}" style=${c.w ? `width:${c.w}px;margin-right:${c.mr ?? 0}px` : ""}>
                    <svg width="32" height="32" viewBox="0 0 32 32" fill="none">${BIG[c.big]}</svg>
                    <span class="bt">${c.bt}</span></div>`
                : html`<div class="col" style=${c.w ? `width:${c.w}px` : ""}>
                    ${c.items!.map((i) => html`<div class="item ${i.off ? "off" : ""}">${ic(i.i)}${i.t ? html`<span>${i.t}</span>` : ""}${i.dd ? html`<i class="tri"></i>` : ""}</div>`)}
                  </div>`)}
            </div>
            <div class="glabel" style=${g.lo ? `transform:translateX(${g.lo / 2}px)` : ""}><span>${g.label}</span>${g.dd ? html`<i class="tri"></i>` : ""}</div>
          </div>`)}
      </div>

      <div class="opts">
        ${DROPS.map(([t, w]) => html`<div class="drop" style="width:${w}px"><span>${t}</span><i class="tri"></i></div>`)}
      </div>

      <div class="body">
        <div class="nav">
          <div class="strip"><i>×</i></div>
          <div class="ptitle">导航栏</div>
          <div class="navtools">${ic("plus2", 14)}${ic("edit", 15)}</div>
          <div class="navcat first">轴线</div>
          <div class="navcat lead">给排水</div>
          ${["n1", "n2", "n3", "n4", "n5", "n6", "n7", "n8"].map((k) => html`<div class="navic ${k === "n3" ? "on" : ""}">${ic(k, 18)}</div>`)}
          <div class="navcat after">建筑结构</div>
          <div class="navcat">自定义</div>
        </div>

        <div class="mid">
          <div class="panel list">
            <div class="strip"><i>×</i></div>
            <div class="ptitle">构件列表</div>
            <div class="ltools">
              ${TOOLS.map(([k, t, dd]) => html`<div class="lt">${ic(k)}<span>${t}</span>${dd ? html`<i class="tri"></i>` : ""}</div>`)}
            </div>
            <div class="search"><span>搜索构件...</span>
              <svg width="11" height="11" viewBox="0 0 11 11" fill="none"><circle cx="5" cy="5" r="3.800" stroke="#bbb" stroke-width="1.200"/><path d="M8 8l2.500 2.500" stroke="#bbb" stroke-width="1.200"/></svg>
            </div>
            <div class="lrows">
              ${LIST.map((t) => html`<div class="lrow">${t}</div>`)}
              <div class="lrow tree"><i class="tri"></i><span>排水系统</span></div>
            </div>
            <div class="hs"><i></i><b></b><i class="r"></i></div>
            <div class="vs"></div>
          </div>

          <div class="panel props">
            <div class="strip"><i>×</i></div>
            <div class="ptitle">属性</div>
            <div class="table">
              <div class="tr head"><div></div><div>属性名称</div><div class="on">属性值</div><div>附加</div></div>
              ${ROWS.map((r) => html`
                <div class="tr">
                  <div class="num ${r.sel ? "on" : ""}">${r.n}</div>
                  <div class="k ${r.blue ? "blue" : ""} ${r.tree ? "treek" : ""}">
                    ${r.tree ? html`<i class="treeln"></i>` : ""}
                    ${r.exp ? html`<span class="exp">${r.exp === "+" ? "+" : "−"}</span>` : ""}${r.k}
                  </div>
                  <div class="v ${r.sel ? "sel" : ""}">${r.v ?? ""}${r.bar ? html`<i class="bar"></i>` : ""}</div>
                  <div class="chk">
                    ${r.c === "c" ? html`<i class="cb on"><svg width="12" height="12" viewBox="0 0 12 12" fill="none"><path d="M2.500 6l2.500 2.500L9.500 3.500" stroke="#fff" stroke-width="1.600"/></svg></i>` : r.c === "u" ? html`<i class="cb"></i>` : ""}
                  </div>
                </div>`)}
            </div>
          </div>
          <div class="foot"><div class="btn">提属性</div></div>
        </div>

        <div class="canvas">
          <div class="splitter"></div>
          <svg width="1080" height="839" viewBox="490 169 1080 839">${drawing()}</svg>
          <div class="float">
            <svg width="16" height="16" viewBox="0 0 16 16" fill="none" style="top:16px">${s("M1 9a7 7 0 0 1 7-7M1 9c0 3 3 5 6 5", B, 1.300)}</svg>
            <svg width="16" height="18" viewBox="0 0 16 18" fill="none" style="top:43px">${s("M1 5l4-4h10v16H1z")}${s("M2 11h5M2 13.500h5", B, 1.500)}</svg>
            <svg width="16" height="20" viewBox="0 0 16 20" fill="none" style="top:71px">${s("M1 6l4-4h10v16H2a1 1 0 0 1-1-1z")}${s("M1 6l4-4h3", B, 1.500)}</svg>
            <svg width="16" height="18" viewBox="0 0 16 18" fill="none" style="top:111px"><path d="M1 6l5-5h9v16H2a1 1 0 0 1-1-1z" fill=${F} stroke=${B}/></svg>
            <svg width="16" height="18" viewBox="0 0 16 18" fill="none" style="top:151px"><circle cx="9" cy="9" r="8" stroke="#777"/></svg>
            <hr/>
            <svg width="16" height="20" viewBox="0 0 16 20" fill="none" style="top:193px">${s("M2 1h14v18H2a1 1 0 0 1-1-1V2a1 1 0 0 1 1-1zM4 6h3M4 10h3M4 14h3")}</svg>
          </div>
        </div>
      </div>

      <div class="status">
        ${TABBTN.map(([x, w, on]) => html`<div class="sb ${on ? "on" : ""}" style="left:${x}px;width:${w}px"></div>`)}
      </div>
    `;
  }
}
